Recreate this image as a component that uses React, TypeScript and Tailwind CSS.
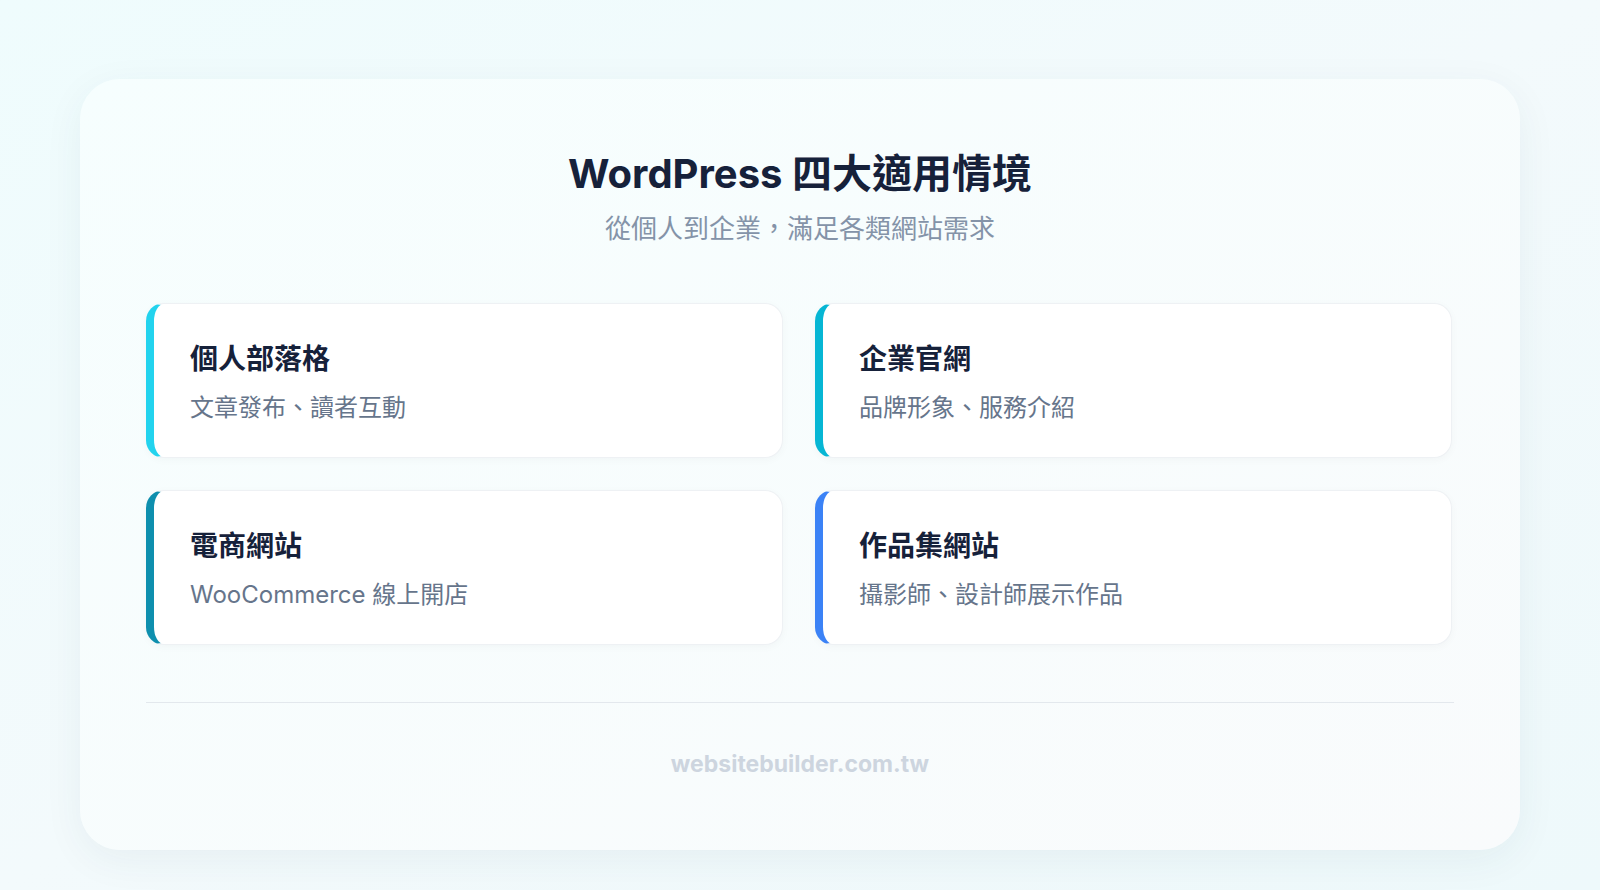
const font = { fontFamily: 'Inter, "Noto Sans CJK TC", sans-serif' };

const items = [
  { title: '個人部落格', desc: '文章發布、讀者互動', color: 'border-l-[#22d3ee]' },
  { title: '企業官網', desc: '品牌形象、服務介紹', color: 'border-l-[#06b6d4]' },
  { title: '電商網站', desc: 'WooCommerce 線上開店', color: 'border-l-[#0e8fae]' },
  { title: '作品集網站', desc: '攝影師、設計師展示作品', color: 'border-l-[#3b82f6]' },
];

export default function App() {
  return (
    <div
      style={font}
      className="w-[1600px] h-[890px] bg-gradient-to-br from-[#effcfd] via-[#f3fafc] to-[#eef9fb] px-[80px] pt-[79px] pb-[40px]"
    >
      <div className="h-full rounded-[40px] bg-gradient-to-br from-[#f6fefe] to-[#f9fbfc] shadow-[0_10px_40px_rgba(30,60,90,0.06)] px-[66px] pt-[68px]">
        <h1 className="text-center text-[40px] font-bold text-[#16213a] leading-[54px]">WordPress 四大適用情境</h1>
        <p className="mt-[10px] text-center text-[26px] text-[#8493a8] leading-[36px]">從個人到企業，滿足各類網站需求</p>
        <div className="mt-[56px] grid grid-cols-2 gap-x-[32px] gap-y-[32px] pr-[2px]">
          {items.map((it) => (
            <div
              key={it.title}
              className={`h-[155px] rounded-[18px] bg-white border border-[#eef1f4] border-l-[8px] ${it.color} shadow-[0_2px_8px_rgba(0,0,0,0.03)] pl-[36px] pt-[36px]`}
            >
              <div className="text-[28px] font-bold text-[#16213a] leading-[38px]">{it.title}</div>
              <div className="mt-[14px] text-[24px] text-[#66758b] leading-[32px]">{it.desc}</div>
            </div>
          ))}
        </div>
        <div className="mt-[57px] border-t border-[#e3e8ed]" />
        <div className="mt-[44px] text-center text-[23px] font-bold text-[#cdd5df]">websitebuilder.com.tw</div>
      </div>
    </div>
  );
}
